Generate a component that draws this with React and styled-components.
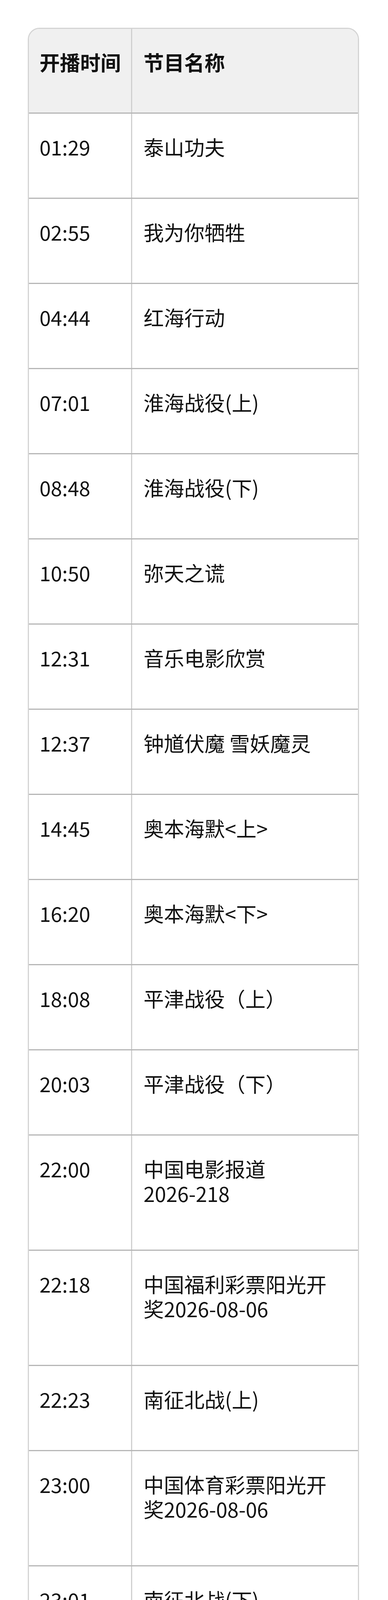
import React from "react";
import styled, { createGlobalStyle } from "styled-components";

const GlobalStyle = createGlobalStyle`
  html, body {
    margin: 0;
    padding: 0;
    background: #ffffff;
  }
  body {
    font-family: "Noto Sans CJK SC", sans-serif;
    color: #111111;
  }
`;

const Page = styled.div`
  position: relative;
  min-height: 4282px;
  padding: 71px 0 0 71px;
  box-sizing: border-box;
`;

const Table = styled.div`
  width: 847px;
  box-sizing: border-box;
  border: 3px solid #d4d4d4;
  border-radius: 30px;
  overflow: hidden;
  background: #ffffff;
`;

const Row = styled.div`
  display: grid;
  grid-template-columns: 264px 1fr;
  box-sizing: border-box;
  height: ${(p) => (p.$head ? 214 : p.$tall ? 295 : 218)}px;
  background: ${(p) => (p.$head ? "#f0f0f0" : "#ffffff")};
  border-top: ${(p) => (p.$head ? "none" : "3px solid #b6b6b6")};
`;

const Cell = styled.div`
  box-sizing: border-box;
  padding: 53px ${(p) => (p.$first ? 10 : 40)}px 0 ${(p) => (p.$first ? 27 : 29)}px;
  font-size: 52px;
  line-height: 63px;
  font-weight: ${(p) => (p.$head ? 700 : 400)};
  color: #111111;
  border-right: ${(p) => (p.$first ? "3px solid #d0d0d0" : "none")};
  white-space: ${(p) => (p.$first ? "nowrap" : "normal")};
  word-break: break-all;
`;

const Mark = styled.span`
  position: absolute;
  left: 951px;
  top: 4232px;
  font-family: "Liberation Sans", sans-serif;
  font-size: 20px;
  color: #333333;
  letter-spacing: 1px;
`;

const rows = [
  ["01:29", "泰山功夫"],
  ["02:55", "我为你牺牲"],
  ["04:44", "红海行动"],
  ["07:01", "淮海战役(上)"],
  ["08:48", "淮海战役(下)"],
  ["10:50", "弥天之谎"],
  ["12:31", "音乐电影欣赏"],
  ["12:37", "钟馗伏魔 雪妖魔灵"],
  ["14:45", "奥本海默<上>"],
  ["16:20", "奥本海默<下>"],
  ["18:08", "平津战役（上）"],
  ["20:03", "平津战役（下）"],
  ["22:00", "中国电影报道 2026-218", true],
  ["22:18", "中国福利彩票阳光开奖2026-08-06", true],
  ["22:23", "南征北战(上)"],
  ["23:00", "中国体育彩票阳光开奖2026-08-06", true],
  ["23:01", "南征北战(下)"],
];

export default function App() {
  return (
    <>
      <GlobalStyle />
      <Page>
        <Table>
          <Row $head>
            <Cell $head $first>开播时间</Cell>
            <Cell $head>节目名称</Cell>
          </Row>
          {rows.map(([time, name, tall]) => (
            <Row key={time} $tall={tall}>
              <Cell $first>{time}</Cell>
              <Cell>
                {name === "中国电影报道 2026-218" ? (
                  <>
                    中国电影报道
                    <br />
                    2026-218
                  </>
                ) : (
                  name
                )}
              </Cell>
            </Row>
          ))}
        </Table>
        <Mark>11</Mark>
      </Page>
    </>
  );
}
